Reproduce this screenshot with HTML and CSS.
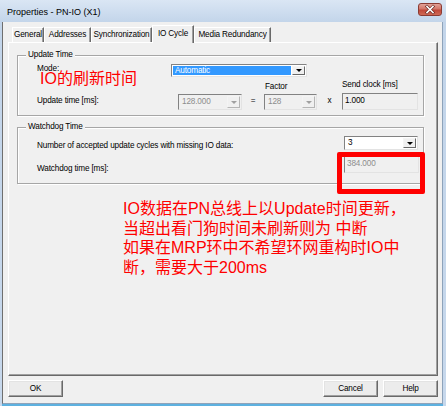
FILE: index.html
```html
<!DOCTYPE html>
<html>
<head>
<meta charset="utf-8">
<link rel="stylesheet" href="styles.css">
</head>
<body>
<div class="window">
  <div class="titlebar">
    <span class="title">Properties - PN-IO (X1)</span>
    <span class="close">
      <svg width="22" height="11" viewBox="0 0 22 11">
        <path d="M8 2.5 L14 8.5 M14 2.5 L8 8.5" stroke="#6b2a24" stroke-width="3" stroke-linecap="square"/>
        <path d="M8 2.5 L14 8.5 M14 2.5 L8 8.5" stroke="#ffffff" stroke-width="1.6" stroke-linecap="square"/>
      </svg>
    </span>
  </div>
  <div class="client">
    <div class="tabs">
      <div class="tab tab-general">General</div>
      <div class="tab tab-addresses">Addresses</div>
      <div class="tab tab-sync">Synchronization</div>
      <div class="tab tab-io active">IO Cycle</div>
      <div class="tab tab-media">Media Redundancy</div>
    </div>
    <div class="panel">
      <div class="group group-update">
        <div class="group-title">Update Time</div>
        <div class="row row-mode">
          <span class="lbl lbl-mode">Mode:</span>
          <div class="combo combo-mode">
            <span class="combo-text selected">Automatic</span>
            <span class="dd"><i class="arrow"></i></span>
          </div>
        </div>
        <div class="row row-time">
          <span class="lbl lbl-ut">Update time [ms]:</span>
          <div class="combo combo-ut disabled">
            <span class="combo-text">128.000</span>
            <span class="dd"><i class="arrow"></i></span>
          </div>
          <span class="op op-eq">=</span>
          <div class="col col-factor">
            <span class="lbl lbl-factor">Factor</span>
            <div class="combo combo-factor disabled">
              <span class="combo-text">128</span>
              <span class="dd"><i class="arrow"></i></span>
            </div>
          </div>
          <span class="op op-x">x</span>
          <div class="col col-send">
            <span class="lbl">Send clock [ms]</span>
            <div class="field field-send">1.000</div>
          </div>
        </div>
      </div>
      <div class="group group-watchdog">
        <div class="group-title">Watchdog Time</div>
        <div class="row row-cycles">
          <span class="lbl lbl-wd">Number of accepted update cycles with missing IO data:</span>
          <div class="combo combo-cycles">
            <span class="combo-text">3</span>
            <span class="dd"><i class="arrow"></i></span>
          </div>
        </div>
        <div class="row row-wdtime">
          <span class="lbl lbl-wd">Watchdog time [ms]:</span>
          <div class="field field-wd disabled">384.000</div>
        </div>
      </div>
    </div>
    <div class="buttons">
      <div class="btn">OK</div>
      <div class="spacer"></div>
      <div class="btn">Cancel</div>
      <div class="btn">Help</div>
    </div>
  </div>

  <div class="note-label">IO的刷新时间</div>
  <div class="note-box"></div>
  <div class="note-text">IO数据在PN总线上以Update时间更新，<br>当超出看门狗时间未刷新则为 中断<br>如果在MRP环中不希望环网重构时IO中<br>断，需要大于200ms</div>
</div>
</body>
</html>
```

FILE: styles.css
```css
html, body {
  margin: 0;
  padding: 0;
}

body {
  width: 446px;
  height: 406px;
  overflow: hidden;
  background: #c9d9ec;
  font-family: "Liberation Sans", Arial, sans-serif;
  font-size: 8.2px;
  letter-spacing: -0.15px;
  color: #000;
}

.window {
  position: relative;
  width: 446px;
  height: 406px;
  display: flex;
  flex-direction: column;
  background: linear-gradient(to bottom, #dae6f4 0px, #c3d5ea 22px, #c7d8ec 100%);
}

/* ---------- title bar ---------- */
.titlebar {
  height: 22px;
  flex: none;
  display: flex;
  align-items: center;
  justify-content: space-between;
  padding: 0 4px 0 7px;
}

.title {
  font-size: 9px;
  letter-spacing: 0;
  color: #000;
  line-height: 12px;
  margin-top: 2px;
}

.close {
  width: 24px;
  height: 13px;
  margin-top: -3px;
  box-sizing: border-box;
  border: 1px solid #8b3b33;
  border-radius: 3px;
  background: linear-gradient(to bottom, #e2a298 0%, #d27568 45%, #c0483a 55%, #cf6a55 100%);
  display: flex;
  align-items: center;
  justify-content: center;
}

.close svg {
  display: block;
}

/* ---------- client area ---------- */
.client {
  flex: 1;
  display: flex;
  flex-direction: column;
  margin: 0 3px 2px 2px;
  padding: 3px 4px 6px 5px;
  background: #f0f0f0;
  border-left: 1px solid #6f6f6f;
  border-right: 1px solid #8ea3ba;
  border-bottom: 1px solid #8ea3ba;
  box-shadow: 0 2px 0 #5db1e0;
}

/* ---------- tabs ---------- */
.tabs {
  height: 17px;
  flex: none;
  display: flex;
  align-items: flex-end;
  padding-left: 4px;
}

.tab {
  height: 15px;
  box-sizing: border-box;
  line-height: 13px;
  text-align: center;
  border-top: 1px solid #ffffff;
  border-left: 1px solid #ffffff;
  border-right: 1px solid #696969;
  box-shadow: inset -1px 0 0 #a0a0a0;
  background: #f0f0f0;
  white-space: nowrap;
  flex: none;
}

.tab-general { width: 32px; }
.tab-addresses { width: 47px; }
.tab-sync { width: 61px; }
.tab-io { width: 42px; }
.tab-media { width: 77px; }

.tab.active {
  height: 18px;
  margin-bottom: -1px;
  line-height: 15px;
  position: relative;
  z-index: 1;
}

/* ---------- tab page ---------- */
.panel {
  flex: 1;
  box-sizing: border-box;
  border: 1px solid;
  border-color: #ffffff #696969 #696969 #ffffff;
  box-shadow: inset -1px -1px 0 #a0a0a0;
  padding-top: 12px;
}

.group {
  width: 407px;
  box-sizing: border-box;
  margin-left: 8px;
  border: 1px solid #a6a6a6;
  box-shadow: inset 1px 1px 0 #ffffff, 1px 1px 0 #ffffff;
  padding-left: 19px;
}

.group-update {
  padding-bottom: 5px;
}

.group-watchdog {
  margin-top: 11px;
  padding-bottom: 10px;
}

.group-title {
  width: fit-content;
  margin: -6px 0 0 -11px;
  padding: 0 2px;
  line-height: 10px;
  background: #f0f0f0;
}

.row {
  display: flex;
}

.lbl {
  line-height: 10px;
  white-space: nowrap;
}

/* mode row */
.row-mode {
  margin-top: 4px;
  height: 13px;
}

.lbl-mode {
  width: 134px;
  flex: none;
  line-height: 9px;
}

/* update time row */
.row-time {
  margin-top: 3px;
  align-items: flex-end;
}

.lbl-ut {
  width: 141px;
  flex: none;
  margin-bottom: 4px;
}

.op {
  line-height: 10px;
  margin-bottom: 4px;
  text-align: center;
  flex: none;
}

.op-eq {
  width: 22px;
}

.op-x {
  width: 25px;
}

.col {
  display: flex;
  flex-direction: column;
  flex: none;
}

.col-factor {
  width: 53px;
  gap: 2px;
}

.lbl-factor {
  margin-left: 1px;
}

.col-send {
  width: 76px;
  gap: 3px;
}

/* combo boxes */
.combo {
  box-sizing: border-box;
  display: flex;
  border: 1px solid;
  border-color: #828282 #e3e3e3 #e3e3e3 #828282;
  background: #ffffff;
  flex: none;
}

.combo.disabled {
  background: #f0f0f0;
  color: #8d8d8d;
}

.combo-text {
  flex: 1;
  padding-left: 2px;
  white-space: nowrap;
  overflow: hidden;
}

.combo-mode {
  width: 136px;
  height: 13px;
  padding: 1px;
}

.combo-mode .combo-text {
  line-height: 9px;
}

.combo-text.selected {
  background: #3399ff;
  color: #ffffff;
  margin-right: 1px;
}

.combo-ut {
  width: 64px;
  height: 16px;
  padding: 1px;
}

.combo-factor {
  width: 53px;
  height: 16px;
  padding: 1px;
}

.combo-ut .combo-text,
.combo-factor .combo-text {
  line-height: 12px;
}

.dd {
  width: 13px;
  box-sizing: border-box;
  flex: none;
  border: 1px solid;
  border-color: #f4f4f4 #696969 #696969 #f4f4f4;
  background: #f0f0f0;
  display: flex;
  align-items: center;
  justify-content: center;
}

.arrow {
  width: 0;
  height: 0;
  border-left: 3px solid transparent;
  border-right: 3px solid transparent;
  border-top: 3px solid #000;
}

.disabled .arrow {
  border-top-color: #a0a0a0;
}

.disabled .dd {
  border-color: #f4f4f4 #b5b5b5 #b5b5b5 #f4f4f4;
}

/* fields */
.field {
  box-sizing: border-box;
  border: 1px solid;
  border-color: #828282 #e3e3e3 #e3e3e3 #828282;
  background: #f0f0f0;
  padding: 1px 0 0 2px;
  line-height: 11px;
  flex: none;
}

.field-send {
  width: 76px;
  height: 17px;
}

.field.disabled {
  color: #8d8d8d;
}

/* watchdog rows */
.row-cycles {
  margin-top: 4px;
  align-items: flex-end;
}

.row-wdtime {
  margin-top: 6px;
  align-items: flex-end;
}

.lbl-wd {
  width: 307px;
  flex: none;
  margin-bottom: -1px;
}

.combo-cycles {
  width: 74px;
  height: 14px;
  padding: 1px;
}

.combo-cycles .combo-text {
  line-height: 10px;
}

.field-wd {
  width: 75px;
  height: 17px;
}

/* ---------- buttons ---------- */
.buttons {
  flex: none;
  display: flex;
  gap: 5px;
  margin-top: 4px;
  height: 17px;
}

.spacer {
  flex: 1;
}

.btn {
  width: 55px;
  height: 17px;
  box-sizing: border-box;
  border: 1px solid;
  border-color: #ffffff #696969 #696969 #ffffff;
  box-shadow: inset -1px -1px 0 #a0a0a0, inset 1px 1px 0 #e3e3e3;
  background: #ececec;
  text-align: center;
  line-height: 15px;
}

/* ---------- red annotations (overlay) ---------- */
.note-label,
.note-text {
  position: absolute;
  color: #ff0000;
  font-family: "Liberation Sans", "Noto Sans CJK SC", sans-serif;
  letter-spacing: 0;
  white-space: nowrap;
}

.note-label {
  left: 40px;
  top: 69px;
  font-size: 16px;
  line-height: 19px;
}

.note-text {
  left: 123px;
  top: 199px;
  font-size: 16px;
  line-height: 19.5px;
}

.note-box {
  position: absolute;
  left: 337px;
  top: 152px;
  width: 88px;
  height: 42px;
  box-sizing: border-box;
  border: 5px solid #ff0000;
  border-radius: 2px;
}
```
